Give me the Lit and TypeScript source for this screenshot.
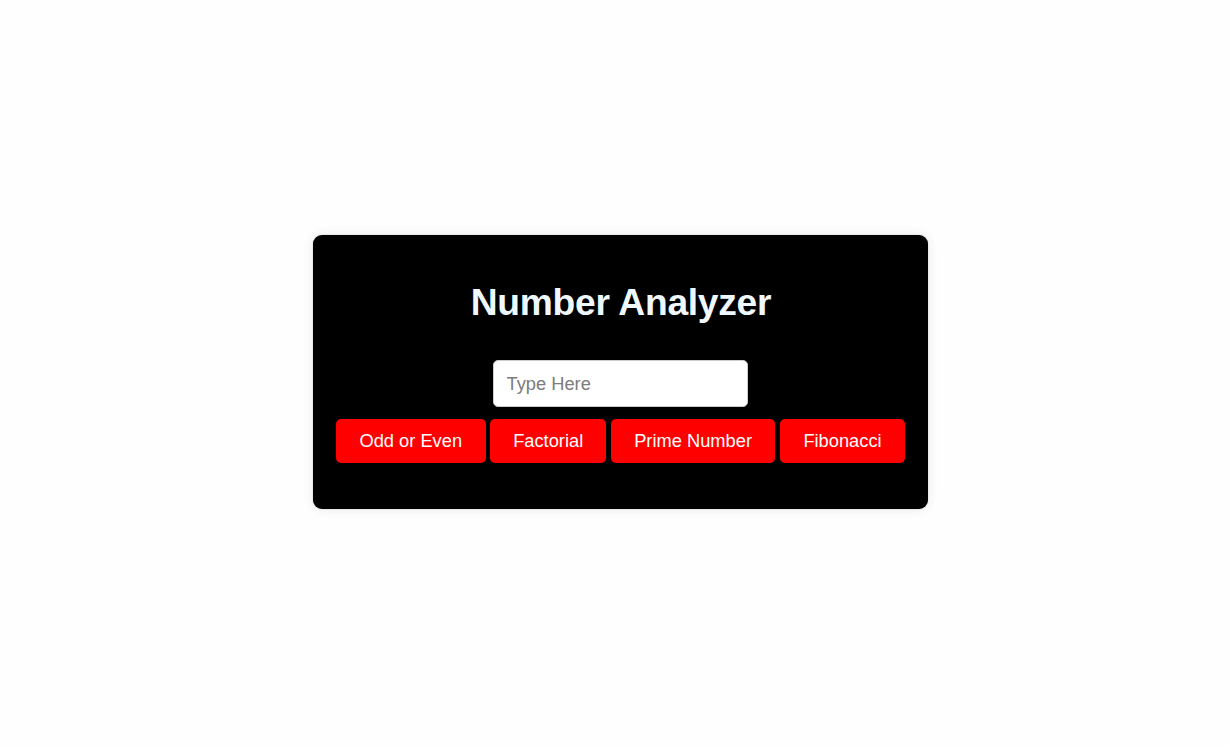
import { LitElement, html, css } from "lit";
import { customElement } from "lit/decorators.js";

@customElement("app-root")
export class AppRoot extends LitElement {
  static styles = css`
    :host {
      display: flex;
      justify-content: center;
      align-items: center;
      height: 746px;
      padding: 0 0 2px 11px;
      box-sizing: border-box;
      background: #fefefe;
      font-family: "Liberation Sans", Arial, sans-serif;
    }
    .card {
      box-sizing: border-box;
      width: 615px;
      height: 274px;
      padding: 45px 23px 0;
      border-radius: 9px;
      background: #000;
      box-shadow: 0 0 1px rgba(0, 0, 0, 0.4), 0 0 12px rgba(0, 0, 0, 0.09);
      text-align: center;
    }
    h1 {
      margin: 0 0 36px;
      padding-left: 1px;
      font-size: 37.2px;
      line-height: 44px;
      letter-spacing: -0.27px;
      color: aliceblue;
    }
    input {
      display: block;
      box-sizing: border-box;
      width: 255px;
      height: 47px;
      margin: 0 auto 12px;
      padding: 0 12px 0 12.5px;
      border: 1px solid #ccc;
      border-radius: 5px;
      font: 18.3px "Liberation Sans", Arial, sans-serif;
      background: #fff;
    }
    input::placeholder {
      color: #7c7c7c;
    }
    .actions {
      display: grid;
      grid-template-columns: 149.6fr 116fr 164.6fr 125fr;
      gap: 4.7px;
    }
    button {
      height: 44px;
      padding: 0;
      border: 0;
      border-radius: 5px;
      background: #f00;
      color: #fff;
      font: 18.3px "Liberation Sans", Arial, sans-serif;
      white-space: nowrap;
    }
  `;

  render() {
    return html`
      <main class="card">
        <h1>Number Analyzer</h1>
        <input type="text" placeholder="Type Here" />
        <div class="actions">
          ${["Odd or Even", "Factorial", "Prime Number", "Fibonacci"].map(
            (label) => html`<button>${label}</button>`
          )}
        </div>
      </main>
    `;
  }
}
